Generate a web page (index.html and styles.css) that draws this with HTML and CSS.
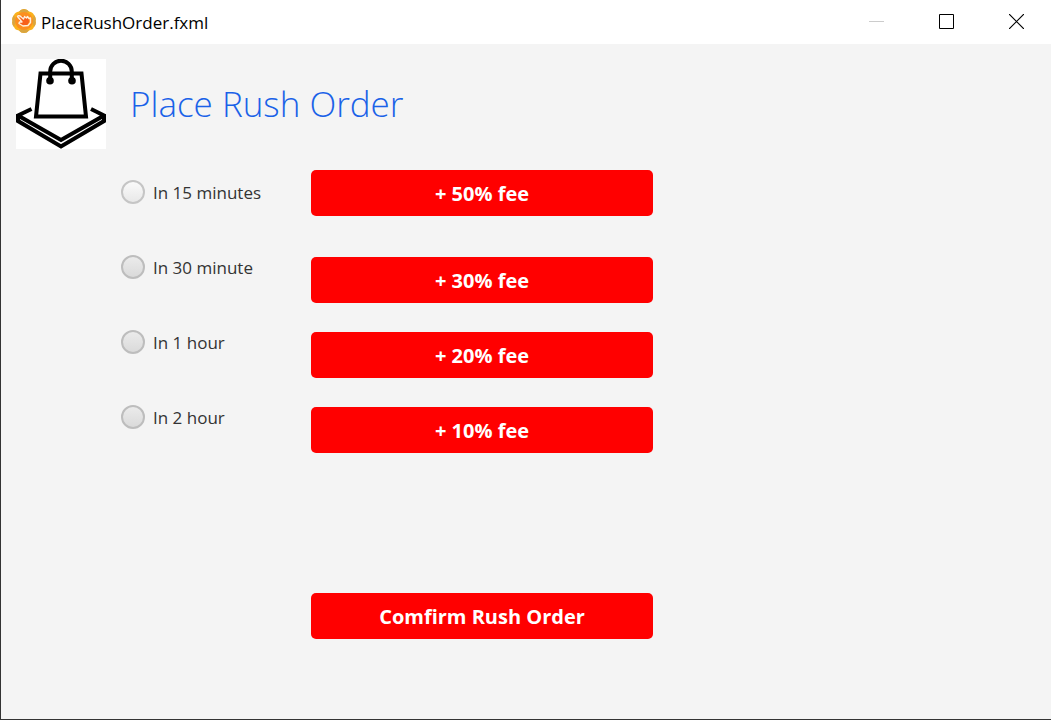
FILE: index.html
```html
<!DOCTYPE html>
<html lang="en">
<head>
<meta charset="utf-8">
<title>PlaceRushOrder.fxml</title>
<link rel="stylesheet" href="styles.css">
</head>
<body>
<div class="window">
  <header class="titlebar">
    <svg class="app-icon" width="24" height="26" viewBox="0 0 24 26" aria-hidden="true">
      <path d="M12 1Q15 1 17 3.500 21 4 22 7 24.500 10 23.500 13 24.500 16 22 19 21 22 17 22.500 15 25 12 25 9 25 7 22.500 3 22 2 19 -.5 16 .5 13 -.5 10 2 7 3 4 7 3.500 9 1 12 1Z" fill="#fbb11b"/>
      <path d="M12 1Q15 1 17 3.500L12 6 7 3.500Q9 1 12 1ZM2 7Q-.5 10 .5 13 -.5 16 2 19L4 13ZM22 7Q24.500 10 23.500 13 24.500 16 22 19L20 13ZM12 25Q15 25 17 22.500L12 20 7 22.500Q9 25 12 25Z" fill="#d9a540"/>
      <circle cx="12" cy="13" r="9" fill="#fc8f20"/>
      <circle cx="12" cy="13" r="5" fill="#f7601c"/>
      <path d="M5.500 8.500Q6 7 8 8L11.500 11 12.500 8.500 14.500 10 15.500 8.500 17 10.500 18.500 10 18.500 14.500 16 17.500 11 18 7 15.500 7.500 14 10 14Z" fill="none" stroke="#fff0dc" stroke-width="1.400" stroke-linejoin="round"/>
    </svg>
    <span class="titlebar-name">PlaceRushOrder.fxml</span>
    <div class="window-controls">
      <button class="window-button" type="button" aria-label="Minimize" disabled>
        <svg width="15" height="15" viewBox="0 0 15 15"><path d="M0 7.500H15" stroke="#ccc"/></svg>
      </button>
      <button class="window-button" type="button" aria-label="Maximize">
        <svg width="15" height="15" viewBox="0 0 15 15"><path d="M.5 .5H14.500V14.500H.5Z" fill="none" stroke="#000"/></svg>
      </button>
      <button class="window-button" type="button" aria-label="Close">
        <svg width="15" height="15" viewBox="0 0 15 15"><path d="M0 0 15 15M15 0 0 15" stroke="#000" stroke-width="1.200"/></svg>
      </button>
    </div>
  </header>
  <main class="content">
    <div class="heading">
      <svg class="logo" width="90" height="90" viewBox="0 0 90 90" aria-hidden="true">
        <path d="M0 0H90V90H0Z" fill="#fff"/>
        <g fill="none" stroke="#000" stroke-width="4">
          <path d="M24.500 14.500H65.500L70 57.500H20Z"/>
          <path d="M34.200 22V12.500A10.800 10.800 0 0 1 55.800 12.500V22"/>
          <path d="M15.500 50 2 56.500 45 81 88 56.500 75 50"/>
          <path d="M2 55.500V62L45 87.500 88 62V55.500"/>
        </g>
        <circle cx="34" cy="21.700" r="3.800"/>
        <circle cx="56" cy="21.700" r="3.800"/>
      </svg>
      <h1 class="title">Place Rush Order</h1>
    </div>
    <form class="order">
      <div class="options">
        <label class="option"><input class="radio radio-hover" type="radio" name="time">In 15 minutes</label>
        <label class="option"><input class="radio" type="radio" name="time">In 30 minute</label>
        <label class="option"><input class="radio" type="radio" name="time">In 1 hour</label>
        <label class="option"><input class="radio" type="radio" name="time">In 2 hour</label>
      </div>
      <div class="actions">
        <button class="action action-first" type="button">+ 50% fee</button>
        <button class="action" type="button">+ 30% fee</button>
        <button class="action" type="button">+ 20% fee</button>
        <button class="action" type="button">+ 10% fee</button>
        <button class="action action-confirm" type="button">Comfirm Rush Order</button>
      </div>
    </form>
  </main>
</div>
</body>
</html>
```
FILE: styles.css
```css
* {
  box-sizing: border-box;
}

body {
  margin: 0;
  font-family: "Open Sans", "Noto Sans", sans-serif;
  background: #f4f4f4;
}

.window {
  display: flex;
  flex-direction: column;
  min-height: 100vh;
  border-left: 1px solid #333;
  border-bottom: 1px solid #333;
}

.titlebar {
  display: flex;
  align-items: center;
  height: 44px;
  padding-left: 11px;
  background: #fff;
}

.app-icon {
  margin-bottom: 2px;
}

.titlebar-name {
  margin-left: 5px;
  font-size: 17px;
  color: #000;
}

.window-controls {
  display: flex;
  height: 100%;
  margin-left: auto;
  padding-bottom: 1px;
}

.window-button {
  display: flex;
  align-items: center;
  justify-content: center;
  width: 70px;
  padding: 0;
  border: 0;
  background: none;
}

.content {
  flex: 1;
  padding: 15px;
}

.heading {
  display: flex;
  align-items: center;
  gap: 24px;
}

.title {
  margin: 0;
  font-size: 35px;
  font-weight: 300;
  line-height: 48px;
  color: #1a62e8;
}

.order {
  display: flex;
  gap: 50px;
  padding: 21px 0 0 105px;
}

.options {
  display: flex;
  flex-direction: column;
  gap: 51px;
  width: 140px;
  padding-top: 10px;
}

.option {
  display: flex;
  align-items: center;
  gap: 8px;
  height: 24px;
  font-size: 17px;
  white-space: nowrap;
  color: #333;
}

.radio {
  appearance: none;
  flex: none;
  width: 24px;
  height: 24px;
  margin: 0;
  border: 2px solid #bdbdbd;
  border-radius: 50%;
  background: linear-gradient(#ebebeb, #dadada);
}

.radio-hover {
  border-color: #c5c5c5;
  background: linear-gradient(#fafafa, #e8e8e8);
}

.actions {
  display: flex;
  flex-direction: column;
  gap: 29px;
  width: 342px;
}

.action {
  height: 46px;
  padding: 0;
  border: 0;
  border-radius: 5px;
  font-family: inherit;
  font-size: 20px;
  font-weight: 700;
  color: #fff;
  background: #f00;
}

.action-first {
  margin-bottom: 12px;
}

.action-confirm {
  margin-top: 111px;
}
```
